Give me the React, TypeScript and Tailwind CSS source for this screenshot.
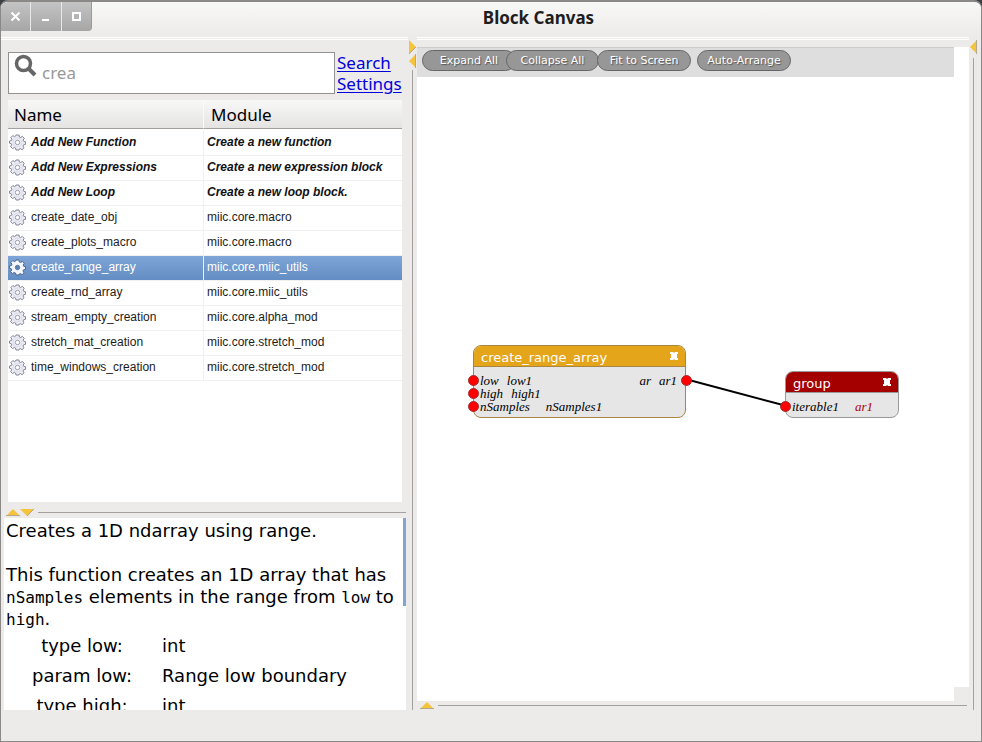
import type { ReactNode } from "react";

type Row = { name: string; module: string; kind?: "new" | "selected" };

const rows: Row[] = [
  { name: "Add New Function", module: "Create a new function", kind: "new" },
  { name: "Add New Expressions", module: "Create a new expression block", kind: "new" },
  { name: "Add New Loop", module: "Create a new loop block.", kind: "new" },
  { name: "create_date_obj", module: "miic.core.macro" },
  { name: "create_plots_macro", module: "miic.core.macro" },
  { name: "create_range_array", module: "miic.core.miic_utils", kind: "selected" },
  { name: "create_rnd_array", module: "miic.core.miic_utils" },
  { name: "stream_empty_creation", module: "miic.core.alpha_mod" },
  { name: "stretch_mat_creation", module: "miic.core.stretch_mod" },
  { name: "time_windows_creation", module: "miic.core.stretch_mod" },
];

const params = [
  ["type low:", "int"],
  ["param low:", "Range low boundary"],
  ["type high:", "int"],
];

const arrowPaths = {
  up: "M0 7 L7 0 L14 7 Z",
  down: "M0 0 L14 0 L7 7 Z",
  right: "M0 0 L7 7 L0 14 Z",
  left: "M7 0 L0 7 L7 14 Z",
};

function Arrow({ dir }: { dir: keyof typeof arrowPaths }) {
  const flat = dir === "up" || dir === "down";
  return (
    <button type="button" aria-label={`Collapse ${dir}`} className="block shrink-0">
      <svg width={flat ? 14 : 7} height={flat ? 7 : 14} className="block">
        <path d={arrowPaths[dir]} fill="#f6c33c" />
        <path
          d={flat ? (dir === "up" ? "M0 6.5H14" : "M14 0L7 7") : dir === "right" ? "M0 14L7 7" : "M6.5 0V14"}
          stroke="#b3a88c"
          fill="none"
        />
      </svg>
    </button>
  );
}

function Gear({ selected }: { selected: boolean }) {
  return (
    <svg width="17" height="17" viewBox="0 0 17 17" className="block shrink-0">
      <path
        d="M7 1h3l.4 2 1.2.5 1.8-1.1 1.8 1.9-1 1.8.5 1.2 1.8.4v2.6l-2 .5-.5 1.2 1 1.8-1.9 1.9-1.8-1.1-1.1.5L10 16H7l-.5-2-1.2-.5-1.8 1-1.9-1.9 1.1-1.8L2.2 9.7.5 9.2V7l2-.6.4-1.2-1-1.7 1.9-1.900 1.700 1 1.100-.5z"
        fill={selected ? "#f4f7fc" : "#ececf4"}
        stroke={selected ? "#50658c" : "#85869a"}
        strokeWidth="1"
      />
      <circle
        cx="8.5"
        cy="8.5"
        r="2.2"
        fill={selected ? "#5d7fb4" : "#ffffff"}
        stroke={selected ? "#5d7fb4" : "#9a9bad"}
      />
      {!selected && <circle cx="8.5" cy="8.5" r="4.5" fill="none" stroke="#dcdce8" />}
    </svg>
  );
}

function WindowButton({ label, children }: { label: string; children: ReactNode }) {
  return (
    <button
      type="button"
      aria-label={label}
      className="flex h-[29px] flex-1 items-center justify-center border-r border-[#e8e8e8] bg-linear-to-b from-[#c4c4c4] to-[#a6a6a6] last:rounded-br last:border-[#999999]"
    >
      <svg width="11" height="11" fill="none" stroke="#ffffff" strokeWidth="2">
        {children}
      </svg>
    </button>
  );
}

function CloseX() {
  return (
    <button type="button" aria-label="Remove block" className="block">
      <svg width="8" height="8" className="block">
        <path d="M0 0H3L4 1L5 0H8V2H7V6H8V8H5L4 7L3 8H0V6H1V2H0Z" fill="#ffffff" />
      </svg>
    </button>
  );
}

function Pill({ children, className }: { children: string; className: string }) {
  return (
    <button
      type="button"
      className={`h-[21px] rounded-full border border-[#666666] bg-[#979797] text-[11px] leading-none text-white [text-shadow:1px_1px_1px_#555555] ${className}`}
    >
      {children}
    </button>
  );
}

function Port({ className }: { className: string }) {
  return <span className={`absolute size-[11px] rounded-full border border-[#a03030] bg-[#ff0000] ${className}`} />;
}

export default function App() {
  return (
    <div className="h-screen bg-[#3c4043] font-['DejaVu_Sans',sans-serif] text-black">
      <div className="flex h-full flex-col overflow-hidden rounded-t-lg border border-t-2 border-[#8a8988] bg-[#edebea]">
        <header className="flex h-[34px] shrink-0 items-start bg-linear-to-b from-[#f8f8f7] to-[#edebea]">
          <div className="flex w-[91px] shrink-0">
            <WindowButton label="Close">
              <path d="M1.5 1.5L9.5 9.5M9.5 1.5L1.5 9.5" />
            </WindowButton>
            <WindowButton label="Minimize">
              <path d="M2 9H9" />
            </WindowButton>
            <WindowButton label="Maximize">
              <path d="M2 2H9V9H2Z" />
            </WindowButton>
          </div>
          <h1 className="flex-1 pl-1 text-center font-['Noto_Sans',sans-serif] text-[17px] leading-8 font-bold text-[#1e1e1e]">
            Block Canvas
          </h1>
        </header>

        <div className="flex min-h-0 flex-1">
          <aside className="flex w-[407px] shrink-0 flex-col">
            <div className="mt-px h-[3px] shrink-0 border-y border-white" />
            <div className="flex flex-1 flex-col pr-1 pl-[7px]">
              <div className="mt-3 flex h-[42px] gap-0.5">
                <label className="flex w-[327px] shrink-0 items-center border border-[#949290] bg-white pl-[5px]">
                  <svg width="24" height="24" fill="none" stroke="#666666" className="mb-3.5 shrink-0">
                    <circle cx="9.5" cy="9.5" r="7" strokeWidth="3.5" />
                    <path d="M14.5 14.5L21 21" strokeWidth="4" />
                  </svg>
                  <input
                    aria-label="Search functions"
                    defaultValue="crea"
                    className="w-full min-w-0 pl-1 font-['Noto_Sans',sans-serif] text-[17px] leading-6 text-[#999999] outline-none"
                  />
                </label>
                <a
                  href="#settings"
                  className="w-16 font-['Noto_Sans',sans-serif] text-[17px] leading-[21px] text-[#0000dd] underline underline-offset-2"
                >
                  Search Settings
                </a>
              </div>

              <div className="mt-1.5 mr-0.5 flex-1 bg-white">
                <table className="w-full table-fixed border-separate border-spacing-0 text-left">
                  <thead>
                    <tr className="h-[29px] bg-linear-to-b from-[#f8f8f8] to-[#e4e3e2] font-['Noto_Sans',sans-serif] text-[17px] leading-[26px]">
                      <th className="w-[196px] border-r border-b border-r-[#fafafa] border-b-[#a3a09e] pt-0.5 pl-1.5 font-normal">
                        Name
                      </th>
                      <th className="border-b border-[#a3a09e] pt-0.5 pl-[7px] font-normal">Module</th>
                    </tr>
                  </thead>
                  <tbody className="font-['Liberation_Sans',sans-serif] text-xs leading-[22px]">
                    <tr className="h-0.5">
                      <td colSpan={2} />
                    </tr>
                    {rows.map((row) => {
                      const selected = row.kind === "selected";
                      const tone = selected
                        ? "bg-linear-to-b from-[#7fa5d7] to-[#628cc2] text-white"
                        : row.kind === "new"
                          ? "font-bold italic text-[#111111]"
                          : "text-[#1c1c1c]";
                      return (
                        <tr key={row.name} className={`h-[25px] ${tone}`}>
                          <td className="border-r border-b border-[#f0f0ee] pb-0.5 pl-px">
                            <span className="flex items-center gap-[5px]">
                              <Gear selected={selected} />
                              {row.name}
                            </span>
                          </td>
                          <td className="border-b border-[#f0f0ee] pb-0.5 pl-[3px]">{row.module}</td>
                        </tr>
                      );
                    })}
                  </tbody>
                </table>
              </div>
            </div>

            <div className="mt-[5px] mr-0.5 mb-px flex h-[10px] items-center pl-[5px]">
              <Arrow dir="up" />
              <Arrow dir="down" />
              <div className="ml-1 h-px flex-1 bg-[#a3a09e]" />
            </div>

            <article className="mr-0.5 ml-[3px] flex h-48 shrink-0 overflow-hidden bg-white">
              <div className="min-w-0 flex-1 pt-0.5 pl-0.5 text-[18px] leading-[22px]">
                <p>Creates a 1D ndarray using range.</p>
                <p className="mt-[22px] whitespace-nowrap">
                  This function creates an 1D array that has
                  <br />
                  <code className="font-['DejaVu_Sans_Mono',monospace] text-base leading-none">nSamples</code> elements in the range from{" "}
                  <code className="font-['DejaVu_Sans_Mono',monospace] text-base leading-none">low</code> to
                  <br />
                  <code className="font-['DejaVu_Sans_Mono',monospace] text-base leading-none">high</code>.
                </p>
                <dl className="mt-px grid grid-cols-[152px_1fr] gap-x-1">
                  {params.map(([term, text]) => (
                    <div key={term} className="contents leading-[30px]">
                      <dt className="text-center">{term}</dt>
                      <dd>{text}</dd>
                    </div>
                  ))}
                </dl>
              </div>
              <div className="h-[88px] w-[3px] shrink-0 bg-[#82a5d3]" />
            </article>
          </aside>

          <div className="flex w-[9px] shrink-0 flex-col items-center pt-1">
            <Arrow dir="right" />
            <Arrow dir="left" />
            <div className="mt-0.5 w-px flex-1 bg-[#a3a09e]" />
          </div>

          <main className="flex min-w-0 flex-1 flex-col">
            <div className="mt-px h-[3px] shrink-0 border-y border-white" />
            <section className="mt-[7px] flex min-h-0 flex-1 flex-col bg-white">
              <nav className="mr-[15px] flex h-[30px] shrink-0 items-center border-t border-[#cccccc] bg-[#dedede] pb-1 pl-[5px]">
                <Pill className="w-[94px]">Expand All</Pill>
                <Pill className="-ml-[10px] w-[93px]">Collapse All</Pill>
                <Pill className="-ml-0.5 w-[94px]">Fit to Screen</Pill>
                <Pill className="ml-1.5 w-[94px]">Auto-Arrange</Pill>
              </nav>

              <div className="relative min-h-0 flex-1 font-['Liberation_Serif',serif] text-[13px] leading-[13px] italic">
                <div className="absolute top-[268px] left-14 h-[73px] w-[213px] rounded-lg border border-[#a98742] bg-[#e6e6e6]">
                  <div className="flex h-[21px] items-center justify-between rounded-t-[7px] border-b border-[#a98742] bg-[#e5a51b] px-[7px] not-italic">
                    <h2 className="pt-0.5 font-['DejaVu_Sans',sans-serif] text-[13px] font-normal text-white">create_range_array</h2>
                    <CloseX />
                  </div>
                  <div className="flex justify-between pt-[7px] pr-2 pl-1.5">
                    <ul>
                      <li className="flex gap-2"><span>low</span><span>low1</span></li>
                      <li className="flex gap-2"><span>high</span><span>high1</span></li>
                      <li className="flex gap-4"><span>nSamples</span><span>nSamples1</span></li>
                    </ul>
                    <p className="flex gap-2"><span>ar</span><span>ar1</span></p>
                  </div>
                </div>

                <div className="absolute top-[294px] left-[368px] h-[47px] w-[114px] rounded-lg border border-[#999999] bg-[#e6e6e6]">
                  <div className="flex h-[21px] items-center justify-between rounded-t-[7px] border-b border-[#999999] bg-[#a50000] px-[7px] not-italic">
                    <h2 className="pt-0.5 font-['DejaVu_Sans',sans-serif] text-[13px] font-normal text-white">group</h2>
                    <CloseX />
                  </div>
                  <p className="flex gap-4 pt-[7px] pl-1.5">
                    <span>iterable1</span>
                    <span className="text-[#b00010]">ar1</span>
                  </p>
                </div>

                <svg className="absolute top-[300px] left-[268px]" width="104" height="34">
                  <path d="M4 3L98 28" stroke="#000000" strokeWidth="2" />
                </svg>
                <Port className="top-[298px] left-[51px]" />
                <Port className="top-[311px] left-[51px]" />
                <Port className="top-[324px] left-[51px]" />
                <Port className="top-[298px] left-[264px]" />
                <Port className="top-[324px] left-[363px]" />
              </div>
              <div className="h-3.5 w-[15px] shrink-0 self-end bg-[#edebea]" />
            </section>
            <div className="flex h-[9px] shrink-0 items-center gap-1 pl-[3px]">
              <Arrow dir="up" />
              <div className="mr-0.5 h-px flex-1 bg-[#a3a09e]" />
            </div>
          </main>

          <div className="mr-[3px] flex w-[9px] shrink-0 flex-col items-center pt-1">
            <Arrow dir="left" />
            <div className="mt-1 w-px flex-1 bg-[#a3a09e]" />
          </div>
        </div>
        <footer className="h-[31px] shrink-0" />
      </div>
    </div>
  );
}
